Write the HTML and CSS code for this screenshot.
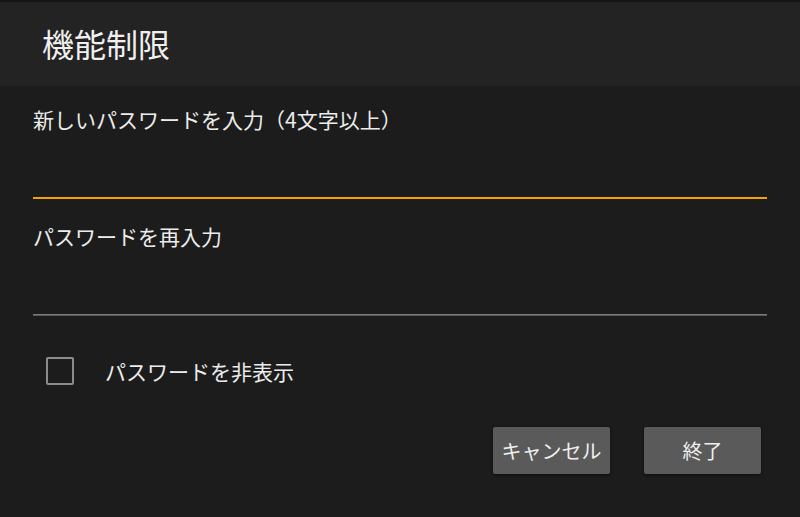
FILE: index.html
```html
<!DOCTYPE html>
<html lang="ja">
<head>
<meta charset="utf-8">
<link rel="stylesheet" href="styles.css">
</head>
<body>
<div class="dialog">
  <header class="head"><h1 class="title">機能制限</h1></header>
  <main class="body">
    <div class="field">
      <div class="label">新しいパスワードを入力（4文字以上）</div>
      <div class="input active"></div>
    </div>
    <div class="field second">
      <div class="label">パスワードを再入力</div>
      <div class="input"></div>
    </div>
    <div class="check-row">
      <span class="box"></span>
      <span class="check-label">パスワードを非表示</span>
    </div>
    <div class="actions">
      <button class="btn">キャンセル</button>
      <button class="btn">終了</button>
    </div>
  </main>
</div>
</body>
</html>
```
FILE: styles.css
```css
html, body {
  margin: 0;
  padding: 0;
  background: #1c1c1c;
}
body {
  width: 800px;
  height: 517px;
  overflow: hidden;
  font-family: "Noto Sans CJK JP", "Noto Sans", sans-serif;
  color: #ececec;
}
.dialog {
  display: flex;
  flex-direction: column;
  height: 517px;
}
.head {
  height: 84px;
  background: #232323;
  border-top: 2px solid #151515;
  display: flex;
  align-items: center;
  padding-left: 42px;
}
.title {
  margin: 0;
  font-size: 32px;
  font-weight: normal;
  line-height: 1;
  color: #f0f0f0;
  position: relative;
  top: -1px;
}
.body {
  padding: 0 33px;
  display: flex;
  flex-direction: column;
}
.field {
  display: flex;
  flex-direction: column;
}
.label {
  font-size: 21px;
  line-height: 1;
  margin-top: 23px;
  color: #ececec;
}
.field.second .label {
  margin-top: 27px;
}
.input {
  height: 1px;
  background: #7a7a7a;
  border-bottom: 1px solid #5a5a5a;
}
.input.active {
  height: 2px;
  background: #f5a100;
  border-bottom: 0;
  margin-top: 67px;
}
.field.second .input {
  margin-top: 67px;
}
.check-row {
  display: flex;
  align-items: center;
  margin-top: 41px;
  padding-left: 13px;
}
.box {
  width: 24px;
  height: 24px;
  border: 2px solid #8c8c8c;
  border-radius: 2px;
}
.check-label {
  margin-left: 31px;
  font-size: 21px;
  line-height: 1;
  color: #ececec;
}
.actions {
  display: flex;
  justify-content: flex-end;
  gap: 34px;
  margin-top: 42px;
  padding-right: 6px;
}
.btn {
  width: 117px;
  height: 47px;
  background: #5a5a5a;
  border: 0;
  border-radius: 2px;
  color: #efefef;
  font-family: "Noto Sans CJK JP", "Noto Sans", sans-serif;
  font-size: 20px;
  padding: 0;
  box-shadow: 0 1px 3px rgba(0,0,0,0.6);
}
```
